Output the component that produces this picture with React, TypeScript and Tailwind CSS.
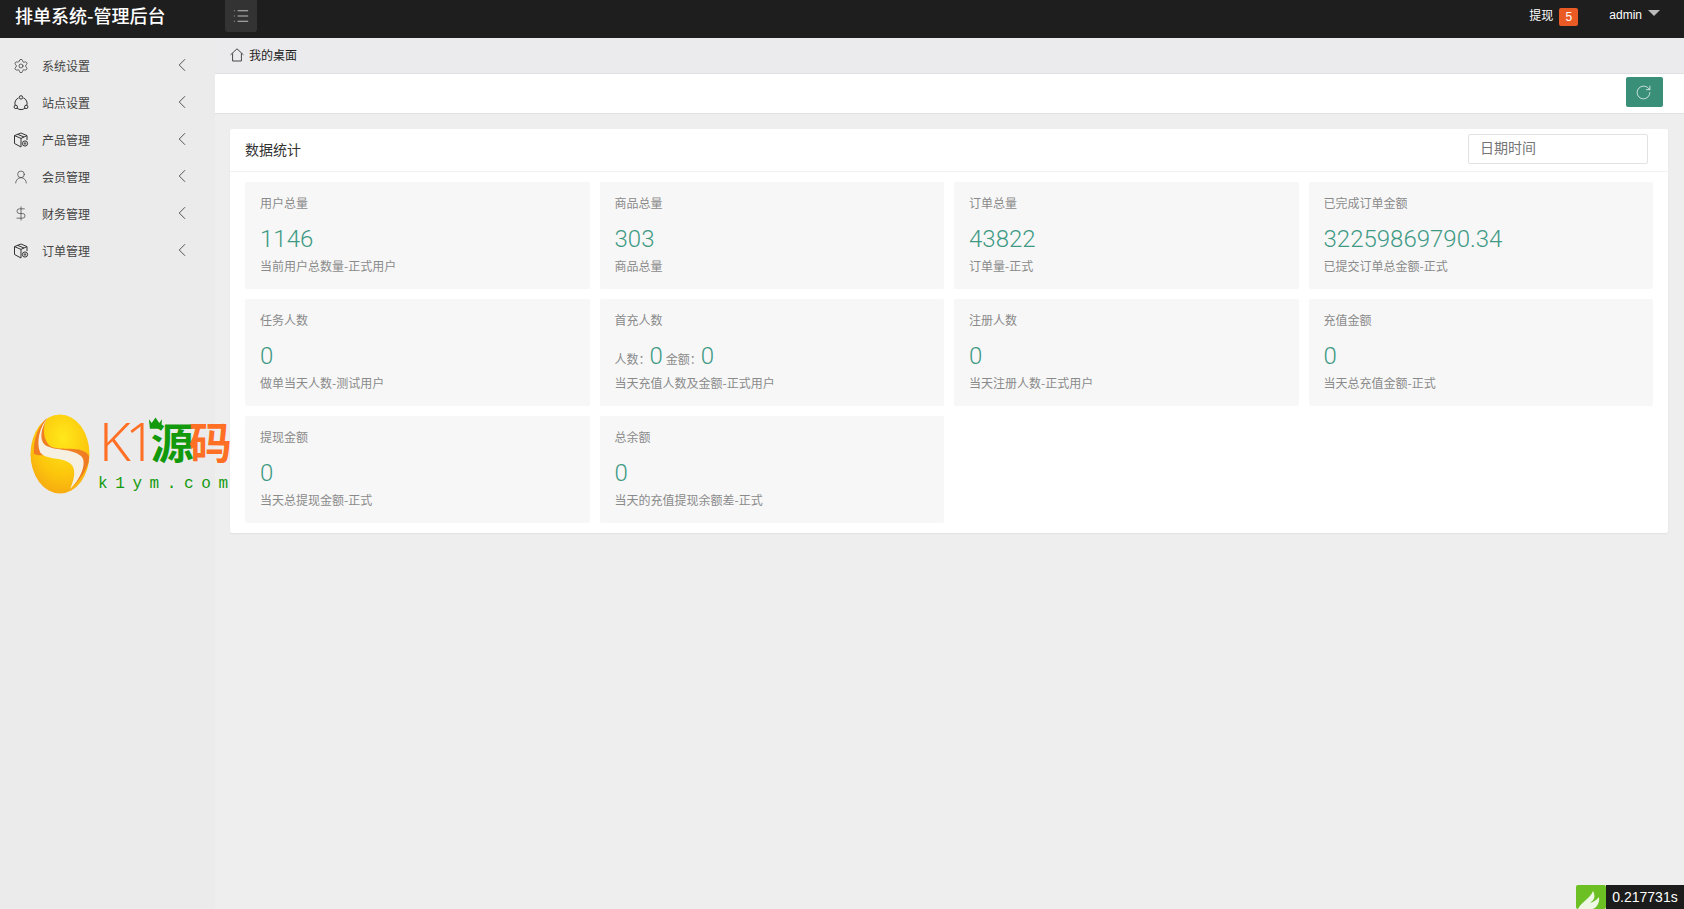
import React from 'react'
import { ChevronLeft, DollarSign, List, RotateCw, Settings, UserRound } from 'lucide-react'

function BoxIcon() {
  return (
    <svg width="16" height="16" viewBox="0 0 16 16" fill="none" stroke="#333" strokeWidth="1">
      <path d="M8 1 14 3.6V8M8 1 1.5 3.6V11.5L8 15M1.5 3.6 8 6.4 14 3.6M8 6.4V15M4.6 2.3 11 5" />
      <circle cx="12" cy="11.5" r="2.6" />
      <circle cx="12" cy="11.5" r="0.8" />
    </svg>
  )
}

function SiteIcon() {
  return (
    <svg width="16" height="16" viewBox="0 0 16 16" fill="none" stroke="#333" strokeWidth="1">
      <path d="M5.6 2.9A6 6 0 0 0 2.2 10.4M4 13.1A6 6 0 0 0 12 13.1M13.8 10.4A6 6 0 0 0 10.4 2.9" />
      <circle cx="8" cy="2.4" r="1.7" />
      <circle cx="2.8" cy="11.9" r="1.7" />
      <circle cx="13.2" cy="11.9" r="1.7" />
    </svg>
  )
}

function HomeIcon() {
  return (
    <svg width="14" height="14" viewBox="0 0 14 14" fill="none" stroke="#333" strokeWidth="0.9">
      <path d="M0.6 6.8 7 0.8 13.4 6.8M2.6 5.4V13H11.4V5.4" />
    </svg>
  )
}

function Logo() {
  return (
    <div className="absolute left-[30px] top-[408px] h-[90px] w-[200px]">
      <svg width="60" height="80" viewBox="0 0 60 80" className="absolute left-0 top-[6px]">
        <defs>
          <radialGradient id="gold" cx="0.55" cy="0.3" r="0.85">
            <stop offset="0" stopColor="#ffe81a" />
            <stop offset="0.55" stopColor="#fcc60c" />
            <stop offset="1" stopColor="#f49c14" />
          </radialGradient>
        </defs>
        <ellipse cx="30" cy="40" rx="29.5" ry="39.5" fill="url(#gold)" />
        <path d="M17 4C8 12 3 26 4 40 12 44 38 36 50 44 56 50 50 66 40 75 48 68 60 54 59 42 52 30 30 38 20 32 13 26 12 13 17 4Z" fill="#ec6a28" opacity="0.8" />
        <path d="M17 5C11 14 9 26 15 31 23 37 44 34 52 43 57 50 50 66 40 75 46 62 46 52 38 48 30 43 15 46 10 38 6 28 10 12 17 5Z" fill="#f5f0e2" />
      </svg>
      <div className="absolute left-[69px] top-0 flex h-[64px] items-start text-[#ff6f24]">
        <span className="text-[54px] leading-[64px] font-['Noto_Sans',sans-serif] font-light tracking-[-5.5px]">K1</span>
        <span className="text-[43px] leading-[64px] font-bold text-[#129a0c] font-['Noto_Sans_CJK_SC',sans-serif] tracking-[-5px]">源</span>
        <span className="text-[43px] leading-[64px] font-bold font-['Noto_Sans_CJK_SC',sans-serif] tracking-[-4px]">码</span>
      </div>
      <svg width="15" height="14" viewBox="0 0 16 14" className="absolute left-[118px] top-[8px]" fill="#129a0c">
        <path d="M1 3 4 7 8 1 12 7 15 3 14 13H2Z" />
      </svg>
      <div className="absolute left-[68px] top-[66px] text-[16px] leading-[20px] text-[#129a0c] font-['Liberation_Mono',monospace] whitespace-nowrap">
        <span className="tracking-[7.6px]">k1ym.co</span>m
      </div>
    </div>
  )
}

const menus = [
  { name: '系统设置', icon: <Settings size={18} strokeWidth={1.1} color="#333" /> },
  { name: '站点设置', icon: <SiteIcon /> },
  { name: '产品管理', icon: <BoxIcon /> },
  { name: '会员管理', icon: <UserRound size={20} strokeWidth={1} color="#333" /> },
  { name: '财务管理', icon: <DollarSign size={19} strokeWidth={1} color="#333" /> },
  { name: '订单管理', icon: <BoxIcon /> },
]

const stats = [
  { title: '用户总量', value: '1146', desc: '当前用户总数量-正式用户' },
  { title: '商品总量', value: '303', desc: '商品总量' },
  { title: '订单总量', value: '43822', desc: '订单量-正式' },
  { title: '已完成订单金额', value: '32259869790.34', desc: '已提交订单总金额-正式' },
  { title: '任务人数', value: '0', desc: '做单当天人数-测试用户' },
  { title: '首充人数', value: '', desc: '当天充值人数及金额-正式用户' },
  { title: '注册人数', value: '0', desc: '当天注册人数-正式用户' },
  { title: '充值金额', value: '0', desc: '当天总充值金额-正式' },
  { title: '提现金额', value: '0', desc: '当天总提现金额-正式' },
  { title: '总余额', value: '0', desc: '当天的充值提现余额差-正式' },
]

const numClass = "text-[24px] leading-[36px] font-light text-[#3f9a85] font-['Roboto',sans-serif]"

export default function App() {
  return (
    <div className="relative h-[909px] w-[1684px] overflow-hidden bg-[#eeeeee] font-['Noto_Sans_CJK_SC',sans-serif]">
      <header className="flex h-[38px] items-center bg-[#1e1e1e] text-white">
        <div className="w-[225px] pb-[8px] pl-[15px] text-[18px] font-medium">排单系统-管理后台</div>
        <div className="flex h-[32px] w-[32px] items-center justify-center self-start rounded-b-[3px] bg-[#333333]">
          <List size={18} strokeWidth={1} color="#eee" />
        </div>
        <div className="ml-auto flex items-center pb-[8px] text-[12px]">
          <span>提现</span>
          <span className="ml-[6px] mt-[4px] flex h-[18px] w-[19px] items-center justify-center rounded-[2px] bg-[#e95a25] text-[12px] font-['Liberation_Sans',sans-serif]">5</span>
          <span className="ml-[31px] font-['Liberation_Sans',sans-serif]">admin</span>
          <span className="ml-[6px] mr-[24px] mb-[4px] h-0 w-0 border-x-[6px] border-t-[6px] border-x-transparent border-t-[#bbbbbb]" />
        </div>
      </header>

      <div className="flex h-[871px]">
        <aside className="w-[215px] shrink-0 bg-[#ebebeb] pt-[9px]">
          {menus.map((m) => (
            <div key={m.name} className="flex h-[37px] items-center pl-[13px] text-[12px] text-[#444444]">
              <span className="flex w-[16px] justify-center">{m.icon}</span>
              <span className="ml-[13px]">{m.name}</span>
              <ChevronLeft size={22} strokeWidth={1} color="#444" className="ml-[81px] -mt-[2px]" />
            </div>
          ))}
        </aside>

        <main className="relative z-10 flex-1">
          <div className="flex h-[36px] items-center border-b border-[#e0e0e2] bg-[#ebeaed] pb-[2px] pl-[15px] text-[12px] text-[#222222]">
            <HomeIcon />
            <span className="ml-[5px]">我的桌面</span>
          </div>
          <div className="flex h-[40px] items-start justify-end border-b border-[#e2e2e2] bg-white pt-[3px] pr-[21px]">
            <button className="flex h-[30px] w-[37px] items-center justify-center rounded-[2px] bg-[#3a8f78] pr-[2px]">
              <RotateCw size={17} strokeWidth={1} color="#fff" />
            </button>
          </div>

          <section className="ml-[15px] mr-[16px] mt-[15px] rounded-[2px] bg-white shadow-[0_1px_2px_rgba(0,0,0,0.06)]">
            <div className="flex h-[43px] items-start justify-between border-b border-[#f1f1f1] pl-[15px] pr-[20px] pt-[5px]">
              <h2 className="-mt-[5px] text-[14px] leading-[40px] text-[#333333]">数据统计</h2>
              <div className="flex h-[30px] w-[180px] items-center rounded-[2px] border border-[#e2e2e2] pb-[3px] pl-[11px] text-[14px] text-[#757575]">日期时间</div>
            </div>
            <div className="grid grid-cols-4 gap-[10px] px-[15px] pt-[10px] pb-[10px]">
              {stats.map((s) => (
                <div key={s.title} className="h-[107px] rounded-[2px] bg-[#f7f7f7] px-[15px] pt-[12px] text-[12px] leading-[18px] text-[#8a8a8a]">
                  <div>{s.title}</div>
                  {s.value ? (
                    <div className={`mt-[9px] ${numClass}`}>{s.value}</div>
                  ) : (
                    <div className="mt-[9px] flex h-[36px] items-center">
                      <span className="mt-[6px]">人数：</span>
                      <span className={`${numClass} -ml-[1px]`}>0</span>
                      <span className="ml-[3px] mt-[6px]">金额：</span>
                      <span className={`${numClass} -ml-[1px]`}>0</span>
                    </div>
                  )}
                  <div>{s.desc}</div>
                </div>
              ))}
            </div>
          </section>
        </main>
      </div>

      <Logo />

      <div className="absolute bottom-0 right-0 z-20 flex h-[24px] items-end">
        <svg width="30" height="24" viewBox="0 0 30 24">
          <rect width="30" height="24" rx="2" fill="#6cc024" />
          <path d="M2 24C6 16 14 14 17 6 20 12 18 15 14 18 20 16 21 14 23 12 24 18 20 24 16 24Z" fill="#eef6e4" />
        </svg>
        <div className="flex h-[24px] w-[78px] items-center justify-center bg-[#1c1c1c] text-[14px] text-white font-['Liberation_Sans',sans-serif]">0.217731s</div>
      </div>
    </div>
  )
}
